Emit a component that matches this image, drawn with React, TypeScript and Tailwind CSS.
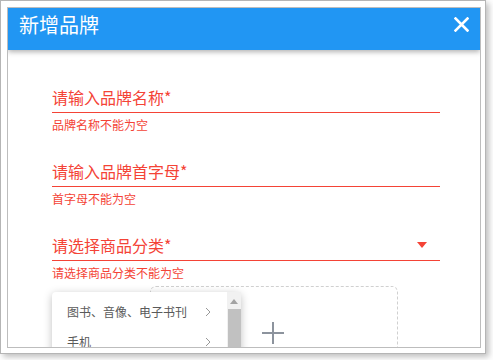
import React from "react";

const font = { fontFamily: '"Noto Sans CJK SC", "Noto Sans", sans-serif' };

function Field({ label, error, select }: { label: string; error: string; select?: boolean }) {
  return (
    <div className="w-[388px]">
      <div className="flex items-center justify-between border-b border-[#f44336] pb-[3px]">
        <span className="text-[16px] leading-[24px] text-[#f44336]">{label}</span>
        {select && (
          <svg width="10" height="6" viewBox="0 0 10 6" className="mr-[13px]">
            <path d="M0 0 L10 0 L5 6 Z" fill="#f44336" />
          </svg>
        )}
      </div>
      <div className="mt-[4px] text-[12px] leading-[16px] text-[#f44336]">{error}</div>
    </div>
  );
}

function Chevron() {
  return (
    <svg width="6" height="10" viewBox="0 0 6 10">
      <path d="M1 1 L5 5 L1 9" stroke="#999" strokeWidth="1" fill="none" />
    </svg>
  );
}

export default function App() {
  return (
    <div className="bg-white w-[493px] h-[360px]" style={font}>
      <div className="w-[486px] h-[354px] border border-[#b5b5b5] bg-white pt-[6px] pl-[6px] shadow-[3px_3px_6px_rgba(0,0,0,0.25)]">
        <div className="relative w-[474px] h-[341px] border border-[#bdbdbd] bg-white overflow-hidden">
          <div className="relative z-10 h-[42px] bg-[#2196f3] flex items-start justify-between pt-[3px] pl-[11px] pr-[11px] shadow-[0_2px_5px_rgba(0,0,0,0.3)]">
            <span className="text-[20px] leading-[28px] text-white">新增品牌</span>
            <svg width="15" height="15" viewBox="0 0 15 15" className="mt-[6px]">
              <path d="M1.5 1.5 L13.5 13.5 M13.5 1.5 L1.5 13.5" stroke="white" strokeWidth="2.6" strokeLinecap="square" />
            </svg>
          </div>
          <div className="pl-[44px] pt-[35px] flex flex-col gap-[26px]">
            <Field label="请输入品牌名称*" error="品牌名称不能为空" />
            <Field label="请输入品牌首字母*" error="首字母不能为空" />
            <Field label="请选择商品分类*" error="请选择商品分类不能为空" select />
          </div>
          <div className="flex pl-[44px] mt-[5px]">
            <div className="w-[98px] text-[14px] leading-[20px] text-[#333] pl-[20px] pt-[2px] whitespace-nowrap">品牌LOGO</div>
            <div className="w-[248px] h-[120px] border border-dashed border-[#d0d0d0] rounded-[6px] flex items-start justify-center pt-[34px] pr-[2px]">
              <svg width="24" height="24" viewBox="0 0 24 24">
                <path d="M12 1 V23 M1 12 H23" stroke="#8c939d" strokeWidth="2" />
              </svg>
            </div>
          </div>
          <div className="absolute left-[44px] top-[284px] w-[189px] h-[80px] bg-white rounded-[4px] shadow-[0_2px_8px_rgba(0,0,0,0.25)] flex">
            <div className="flex-1 pt-[5px] text-[12px] text-[#5a5a5a] whitespace-nowrap">
              <div className="h-[30px] flex items-center justify-between pl-[15px] pr-[16px]">
                <span>图书、音像、电子书刊</span>
                <Chevron />
              </div>
              <div className="h-[30px] flex items-center justify-between pl-[15px] pr-[16px]">
                <span>手机</span>
                <Chevron />
              </div>
            </div>
            <div className="w-[14px] bg-[#f1f1f1] flex flex-col items-center">
              <svg width="8" height="5" viewBox="0 0 8 5" className="mt-[7px]"><path d="M0 5 L8 5 L4 0 Z" fill="#a3a3a3" /></svg>
              <div className="mt-[5px] w-[13px] flex-1 bg-[#c1c1c1]" />
            </div>
          </div>
        </div>
      </div>
    </div>
  );
}
